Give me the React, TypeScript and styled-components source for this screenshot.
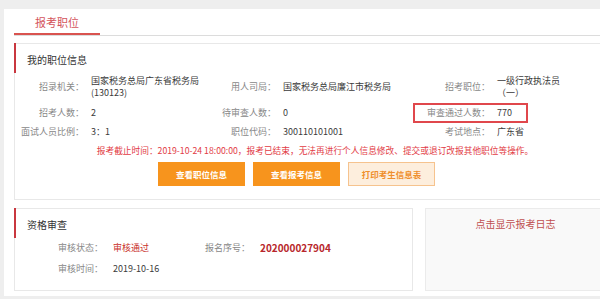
import React from 'react';
import styled, { createGlobalStyle } from 'styled-components';

const GlobalStyle = createGlobalStyle`
  html, body {
    margin: 0;
    padding: 0;
    background: #eeeeee;
    overflow: hidden;
  }
  body {
    font-family: "Noto Sans CJK SC", "Noto Sans", sans-serif;
    font-size: 9px;
    color: #333;
  }
`;

const positionRows = [
  [
    { label: '招录机关：', value: '国家税务总局广东省税务局(130123)' },
    { label: '用人司局：', value: '国家税务总局廉江市税务局' },
    { label: '招考职位：', value: '一级行政执法员（一）' },
  ],
  [
    { label: '招考人数：', value: '2' },
    { label: '待审查人数：', value: '0' },
    { label: '审查通过人数：', value: '770', highlight: true },
  ],
  [
    { label: '面试人员比例：', value: '3：1' },
    { label: '职位代码：', value: '300110101001' },
    { label: '考试地点：', value: '广东省' },
  ],
];

const App = () => {
  return (
    <>
      <GlobalStyle />
      <Page>
        <Panel>
          <TabBar>
            <Tab>报考职位</Tab>
          </TabBar>

          <Box>
            <BoxHeader>我的职位信息</BoxHeader>
            <InfoGrid>
              {positionRows.map((row) =>
                row.map((cell) =>
                  cell.highlight ? (
                    <HighlightCell key={cell.label}>
                      <Label>{cell.label}</Label>
                      <Value>{cell.value}</Value>
                    </HighlightCell>
                  ) : (
                    <React.Fragment key={cell.label}>
                      <Label>{cell.label}</Label>
                      <Value>{cell.value}</Value>
                    </React.Fragment>
                  )
                )
              )}
            </InfoGrid>
            <Notice>
              报考截止时间：2019-10-24 18:00:00，报考已结束，无法再进行个人信息修改、提交或退订改报其他职位等操作。
            </Notice>
            <ButtonRow>
              <ActionButton>查看职位信息</ActionButton>
              <ActionButton>查看报考信息</ActionButton>
              <ActionButton $light>打印考生信息表</ActionButton>
            </ButtonRow>
          </Box>

          <BottomRow>
            <Box>
              <BoxHeader>资格审查</BoxHeader>
              <ReviewGrid>
                <ReviewLabel>审核状态：</ReviewLabel>
                <ReviewValue $status>审核通过</ReviewValue>
                <ReviewLabel>报名序号：</ReviewLabel>
                <ReviewValue $number>202000027904</ReviewValue>
                <ReviewLabel>审核时间：</ReviewLabel>
                <ReviewValue>2019-10-16</ReviewValue>
              </ReviewGrid>
            </Box>
            <LogBox>
              <LogLink>点击显示报考日志</LogLink>
            </LogBox>
          </BottomRow>
        </Panel>
      </Page>
    </>
  );
};

const Page = styled.div`
  width: 620px;
  padding: 9px 0 0 4px;
`;

const Panel = styled.div`
  width: 612px;
  box-sizing: border-box;
  background: #fff;
  padding: 0 10px 5px;
`;

const TabBar = styled.div`
  display: flex;
  height: 26px;
  border-bottom: 1px solid #dcdcdc;
  margin-bottom: 7px;
`;

const Tab = styled.div`
  width: 86px;
  height: 26px;
  box-sizing: border-box;
  border-bottom: 2px solid #d9534f;
  color: #d4545c;
  font-size: 11px;
  line-height: 26px;
  text-align: center;
`;

const Box = styled.div`
  border: 1px solid #e8e8e8;
  background: #fff;
`;

const BoxHeader = styled.div`
  height: 30px;
  margin: -1px 0 0 -1px;
  border-left: 2px solid #c9373f;
  padding-left: 11px;
  font-size: 10px;
  line-height: 34px;
  color: #333;
`;

const InfoGrid = styled.div`
  display: grid;
  grid-template-columns: 76px 114px 78px 137px 77px 66px;
  margin-top: -2px;
`;

const Label = styled.div`
  align-self: center;
  padding: 3.5px 7px 3.5px 0;
  text-align: right;
  line-height: 12.5px;
  color: #888;
  white-space: nowrap;
`;

const Value = styled.div`
  align-self: center;
  padding: 3.5px 0;
  line-height: 12.5px;
  color: #3a3a3a;
`;

const HighlightCell = styled.div`
  grid-column: span 2;
  display: grid;
  grid-template-columns: 77px 66px;
  position: relative;

  &::after {
    content: '';
    position: absolute;
    left: -7px;
    top: 0;
    bottom: 0;
    width: 115px;
    border: 2px solid #e0474c;
    box-sizing: border-box;
  }
`;

const Notice = styled.p`
  margin: 0;
  padding: 3px 0 0 10px;
  text-align: center;
  font-size: 8.7px;
  line-height: 12.5px;
  color: #e23b45;
  white-space: nowrap;
`;

const ButtonRow = styled.div`
  display: flex;
  gap: 8px;
  padding: 4px 0 13px 143px;
`;

const ActionButton = styled.button<{ $light?: boolean }>`
  width: 87px;
  height: 24px;
  padding: 0;
  border: 1px solid ${(p) => (p.$light ? '#f6c38e' : '#f7941d')};
  background: ${(p) => (p.$light ? '#fdeedd' : '#f7941d')};
  color: ${(p) => (p.$light ? '#ef8f2c' : '#fff')};
  font-family: "Noto Sans CJK SC", sans-serif;
  font-size: 8.5px;
  font-weight: bold;
  cursor: pointer;
`;

const BottomRow = styled.div`
  display: grid;
  grid-template-columns: 399px 1fr;
  gap: 12px;
  margin-top: 8px;
`;

const ReviewGrid = styled.div`
  display: grid;
  grid-template-columns: 98px 87px 60px 1fr;
  padding-bottom: 10px;
`;

const ReviewLabel = styled.div`
  padding: 4.25px 10px 4.25px 0;
  text-align: right;
  line-height: 12.5px;
  color: #888;
`;

const ReviewValue = styled.div<{ $status?: boolean; $number?: boolean }>`
  padding: 4.25px 0;
  line-height: 12.5px;
  color: ${(p) => (p.$status ? '#c9302c' : p.$number ? '#b8272c' : '#3a3a3a')};
  font-size: ${(p) => (p.$number ? '10px' : '9px')};
  font-weight: ${(p) => (p.$number ? 'bold' : 'normal')};
`;

const LogBox = styled.div`
  border: 1px solid #ebebeb;
  background: #f9f9f9;
  text-align: center;
  padding-top: 9px;
`;

const LogLink = styled.span`
  font-size: 10px;
  line-height: 12px;
  color: #bf4f4f;
  cursor: pointer;
`;

export default App;
